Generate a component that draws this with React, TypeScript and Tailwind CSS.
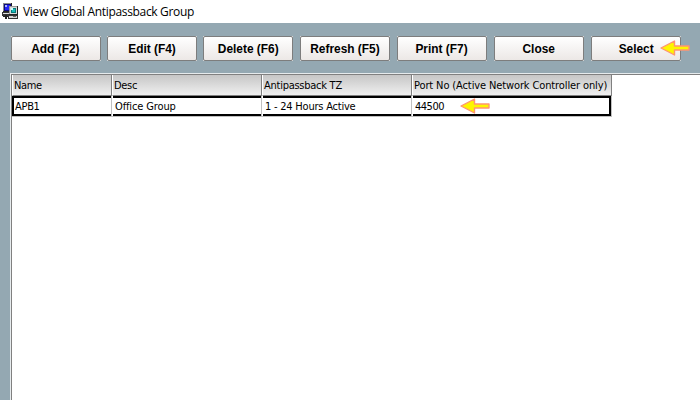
import React from 'react';

type Column = { title: string; value: string; cell: string; titleClass: string; valueClass: string };

const buttons = [
  { label: 'Add (F2)', box: 'ml-0', text: 'mr-[1px]' },
  { label: 'Edit (F4)', box: 'ml-[6px]', text: 'mr-[1px]' },
  { label: 'Delete (F6)', box: 'ml-[6px]', text: '' },
  { label: 'Refresh (F5)', box: 'ml-[7px]', text: '' },
  { label: 'Print (F7)', box: 'ml-[7px]', text: '' },
  { label: 'Close', box: 'ml-[7px]', text: '' },
  { label: 'Select', box: 'ml-[7px]', text: '' },
];

const columns: Column[] = [
  { title: 'Name', value: 'APB1', cell: 'w-[100px]', titleClass: 'tracking-[-0.4px]', valueClass: 'tracking-[-0.3px]' },
  { title: 'Desc', value: 'Office Group', cell: 'w-[150px]', titleClass: 'tracking-[-0.3px]', valueClass: 'tracking-[-0.13px]' },
  { title: 'Antipassback TZ', value: '1 - 24 Hours Active', cell: 'w-[150px]', titleClass: 'tracking-[-0.26px]', valueClass: 'tracking-[-0.22px]' },
  { title: 'Port No (Active Network Controller only)', value: '44500', cell: 'w-[200px]', titleClass: 'tracking-[-0.12px]', valueClass: 'tracking-[-0.5px]' },
];

function ComputersIcon() {
  return (
    <svg width="16" height="16" viewBox="0 0 16 16" shapeRendering="crispEdges">
      <rect x="1" y="0" width="9" height="9" fill="#c4c4c4" />
      <path d="M1 0h9v1H1zM1 0h1v8H1z" fill="#8a8a8a" />
      <path d="M9 0h1v9H1V8h8z" fill="#222" />
      <rect x="2" y="1" width="7" height="7" fill="#0a0a80" />
      <rect x="3" y="2" width="5" height="5" fill="#2424f4" />
      <rect x="3" y="2" width="2" height="2" fill="#a8b4ff" />
      <rect x="0" y="9" width="8" height="4" fill="#333" />
      <rect x="1" y="10" width="6" height="1" fill="#ddd" />
      <path d="M3 12h2v4H3zM1 13h6v1H1z" fill="#222" />
      <rect x="7" y="3" width="9" height="9" fill="#d8d8d8" />
      <path d="M7 3h9v1H7zM7 3h1v9H7z" fill="#999" />
      <path d="M15 3h1v9H7v-1h8z" fill="#222" />
      <rect x="9" y="5" width="5" height="5" fill="#067878" />
      <rect x="10" y="6" width="3" height="3" fill="#18bcbc" />
      <rect x="9" y="5" width="2" height="2" fill="#c8ffff" />
      <rect x="6" y="12" width="10" height="4" fill="#333" />
      <rect x="7" y="13" width="8" height="2" fill="#d4d4d4" />
      <rect x="11" y="13" width="3" height="1" fill="#666" />
    </svg>
  );
}

function Arrow() {
  return (
    <svg width="32" height="18" viewBox="0 0 32 18" className="block">
      <path d="M2 9 L15.5 2 V7 H30 V11 H15.5 V16 Z" fill="#fdf500" stroke="#ff9470" strokeWidth="1.4" strokeLinejoin="round" />
    </svg>
  );
}

export default function App() {
  return (
    <div className="relative flex h-[400px] w-[700px] flex-col overflow-hidden bg-[#94a8b2] text-black">
      <header className="flex h-[23px] shrink-0 items-start bg-white pl-[2px] pt-[3px]">
        <ComputersIcon />
        <span className="ml-[5px] whitespace-nowrap font-['Open_Sans',sans-serif] text-[12px] leading-[18px] tracking-[-0.33px]">View Global Antipassback Group</span>
      </header>
      <nav className="flex h-[50px] shrink-0 pl-[11px] pt-[13px]">
        {buttons.map((b) => (
          <div key={b.label} className={`h-[25px] w-[90px] shrink-0 bg-[#dedede] ${b.box}`}>
            <button className="flex h-full w-full items-center justify-center rounded-[2px] border border-[#7d7d7d] bg-linear-to-b from-white to-[#ece8e6] font-['Liberation_Sans',sans-serif] text-[13px] font-bold leading-none whitespace-nowrap">
              <span className={`scale-x-[0.915] ${b.text}`}>{b.label}</span>
            </button>
          </div>
        ))}
      </nav>
      <main className="ml-[10px] flex-1 border-l border-t border-[#e6ebed] font-['DejaVu_Sans_Condensed','DejaVu_Sans',sans-serif] text-[11px] leading-[18px]">
        <div className="h-full border-l border-t border-[#808080] bg-white">
          <div className="flex h-[21px] w-[600px] bg-linear-to-b from-[#c6c6c6] to-[#f2f2f2]">
            {columns.map((c) => (
              <div key={c.title} className={`shrink-0 whitespace-nowrap border-r border-b border-l border-[#808080] border-l-white pl-[1px] pt-[2px] leading-[17px] ${c.cell}`}>
                <span className={c.titleClass}>{c.title}</span>
              </div>
            ))}
          </div>
          <div className="flex h-[21px] w-[600px] border-b border-[#c0c0c0]">
            {columns.map((c, i) => (
              <div key={c.title} className={`shrink-0 border-r border-[#c0c0c0] ${i === 0 ? '' : 'pl-[1px]'} ${c.cell}`}>
                <div className={`h-full whitespace-nowrap border-y-2 border-black leading-[17px] ${i === 0 ? 'border-l-2 pl-[1px]' : 'pl-[2px]'} ${i === 3 ? 'border-r-2' : ''}`}>
                  <span className={c.valueClass}>{c.value}</span>
                </div>
              </div>
            ))}
          </div>
        </div>
      </main>
      <div className="absolute left-[659px] top-[39px]"><Arrow /></div>
      <div className="absolute left-[459px] top-[97px]"><Arrow /></div>
    </div>
  );
}
